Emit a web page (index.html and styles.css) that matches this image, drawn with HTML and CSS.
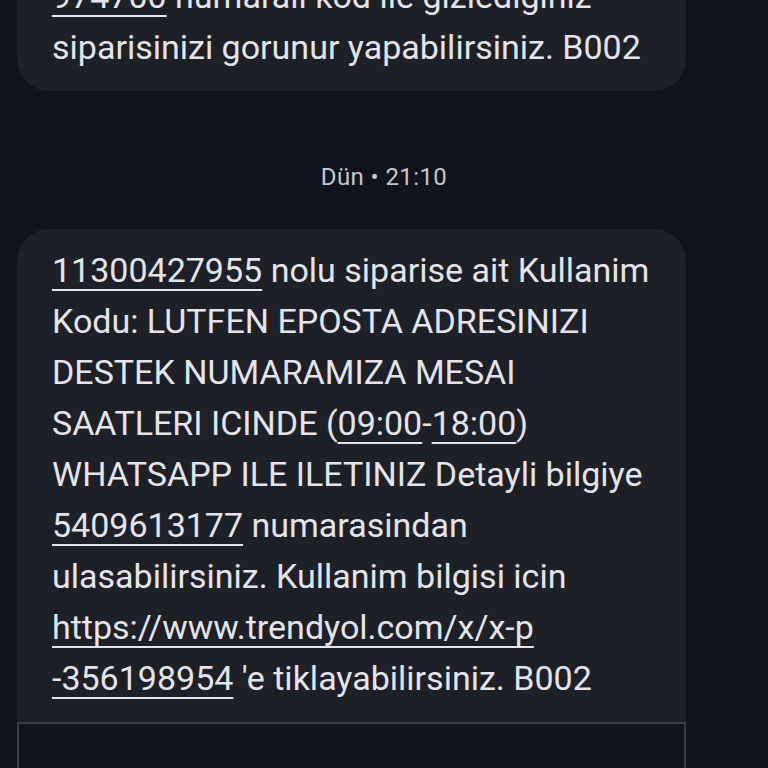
FILE: index.html
```html
<!DOCTYPE html>
<html>
<head>
<meta charset="utf-8">
<link rel="stylesheet" href="styles.css">
</head>
<body>
<div class="thread">
  <div class="bubble first">
    <p class="msg"><a class="link">974700</a> numarali kod ile gizlediginiz<br>siparisinizi gorunur yapabilirsiniz. B002</p>
  </div>
  <div class="stamp">Dün • 21:10</div>
  <div class="bubble second">
    <p class="msg"><a class="link">11300427955</a> nolu siparise ait Kullanim<br>Kodu: LUTFEN EPOSTA ADRESINIZI<br>DESTEK NUMARAMIZA MESAI<br>SAATLERI ICINDE (<a class="link">09:00</a>-<a class="link">18:00</a>)<br>WHATSAPP ILE ILETINIZ Detayli bilgiye<br><a class="link">5409613177</a> numarasindan<br>ulasabilirsiniz. Kullanim bilgisi icin<br><a class="link">https://www.trendyol.com/x/x-p<br>-356198954</a> 'e tiklayabilirsiniz. B002</p>
  </div>
  <div class="attach"></div>
</div>
</body>
</html>
```
FILE: styles.css
```css
html, body {
  margin: 0;
  padding: 0;
  background: #11131a;
  height: 768px;
  overflow: hidden;
}
.thread {
  display: flex;
  flex-direction: column;
  margin-top: -45px;
}
.bubble {
  background: #1e2028;
  border-radius: 32px;
  padding: 16px 20px 18px 35px;
  margin: 0 82px 0 17px;
}
.bubble.second {
  border-radius: 32px 32px 0 0;
}
.msg {
  margin: 0;
  font-family: Roboto, "Noto Sans", sans-serif;
  font-size: 34px;
  line-height: 51px;
  color: #e4e4ea;
  letter-spacing: 0px;
  white-space: nowrap;
}
.link {
  text-decoration: underline;
  text-decoration-thickness: 2px;
  text-underline-offset: 7px;
  color: inherit;
}
.stamp {
  font-family: Roboto, "Noto Sans", sans-serif;
  font-size: 24px;
  letter-spacing: 0.4px;
  color: #c4c6d0;
  text-align: center;
  padding: 72px 0 38px;
  line-height: 28px;
}
.attach {
  height: 80px;
  margin: 0 82px 0 17px;
  border: 2px solid #3b3d46;
  border-bottom: none;
  background: #12141c;
}
```
